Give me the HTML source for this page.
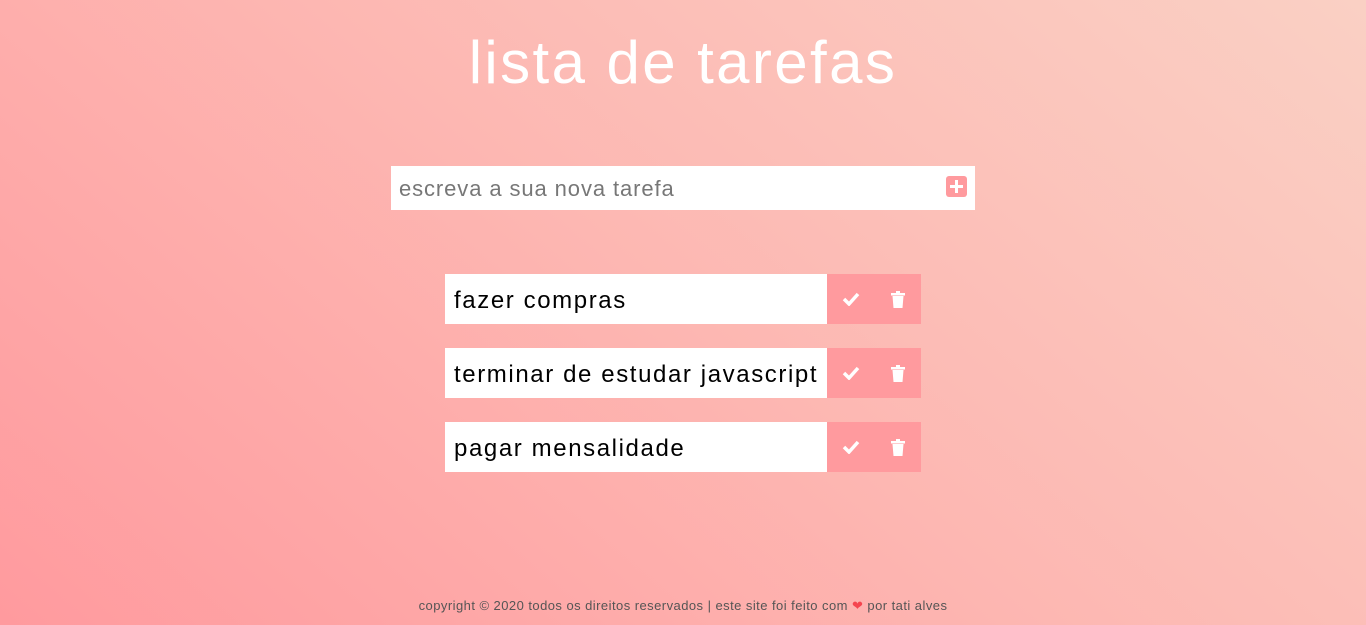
<!DOCTYPE html>
<html><head><meta charset="utf-8"><style>
*{margin:0;padding:0;box-sizing:border-box}
body{width:1366px;height:625px;overflow:hidden;background:linear-gradient(40deg,#ff9a9e 0%,#fdb7b2 50%,#fad0c4 100%);font-family:"Liberation Sans",sans-serif;position:relative}
h1{position:absolute;top:28px;left:0;width:1366px;text-align:center;color:#fff;font-weight:normal;font-size:60px;letter-spacing:2.4px}
.inp{position:absolute;left:391px;top:166px;width:584px;height:44px;background:#fff}
.inp span{position:absolute;left:8px;top:10px;font-size:22px;color:#777;letter-spacing:0.9px}
.plus{position:absolute;left:946px;top:176px;width:21px;height:21px;background:#ff9a9e;border-radius:3px}
.plus:before{content:"";position:absolute;left:4px;top:9px;width:13px;height:3px;background:#fff}
.plus:after{content:"";position:absolute;left:9px;top:4px;width:3px;height:13px;background:#fff}
.item{position:absolute;left:445px;width:476px;height:50px;display:flex}
.item .t{width:382px;background:#fff;font-size:24px;padding-left:9px;padding-top:2px;line-height:50px;color:#000;white-space:nowrap;letter-spacing:1.6px}
.item .b{width:47px;background:#ff9a9e;display:flex;align-items:center;justify-content:center}
footer{position:absolute;top:598px;left:0;width:1366px;text-align:center;font-size:13px;color:#555;letter-spacing:0.45px}
</style></head><body>
<h1>lista de tarefas</h1>
<div class="inp"><span>escreva a sua nova tarefa</span></div>
<div class="plus"></div>
<div class="item" style="top:274px"><div class="t">fazer compras</div><div class="b"><svg width="18" height="14" viewBox="0 0 18 14"><path d="M2 7l5 5L16 2" stroke="#fff" stroke-width="3.5" fill="none"/></svg></div><div class="b"><svg width="14" height="17" viewBox="0 0 14 17"><rect x="0" y="2" width="14" height="2.5" fill="#fff"/><rect x="5" y="0" width="4" height="3" fill="#fff"/><path d="M1.5 5h11l-1 12h-9z" fill="#fff"/></svg></div></div>
<div class="item" style="top:348px"><div class="t">terminar de estudar javascript</div><div class="b"><svg width="18" height="14" viewBox="0 0 18 14"><path d="M2 7l5 5L16 2" stroke="#fff" stroke-width="3.5" fill="none"/></svg></div><div class="b"><svg width="14" height="17" viewBox="0 0 14 17"><rect x="0" y="2" width="14" height="2.5" fill="#fff"/><rect x="5" y="0" width="4" height="3" fill="#fff"/><path d="M1.5 5h11l-1 12h-9z" fill="#fff"/></svg></div></div>
<div class="item" style="top:422px"><div class="t">pagar mensalidade</div><div class="b"><svg width="18" height="14" viewBox="0 0 18 14"><path d="M2 7l5 5L16 2" stroke="#fff" stroke-width="3.5" fill="none"/></svg></div><div class="b"><svg width="14" height="17" viewBox="0 0 14 17"><rect x="0" y="2" width="14" height="2.5" fill="#fff"/><rect x="5" y="0" width="4" height="3" fill="#fff"/><path d="M1.5 5h11l-1 12h-9z" fill="#fff"/></svg></div></div>
<footer>copyright © 2020 todos os direitos reservados | este site foi feito com <span style="color:#f5454f">❤</span> por tati alves</footer>
</body></html>
